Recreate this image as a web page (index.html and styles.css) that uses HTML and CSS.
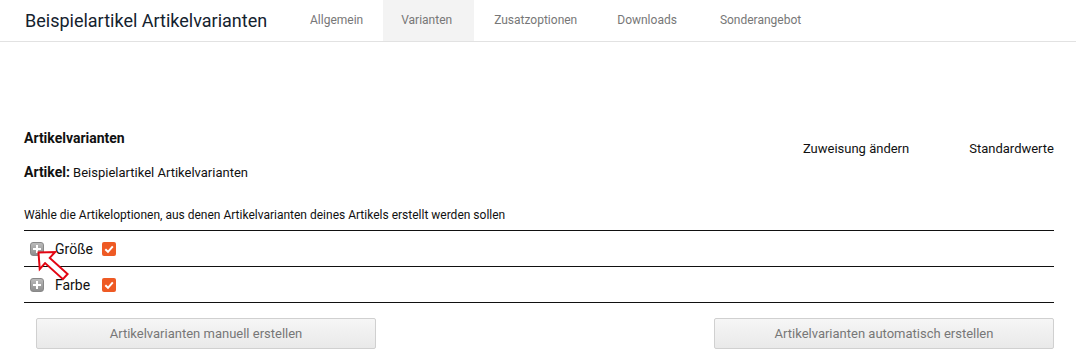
FILE: index.html
```html
<!DOCTYPE html>
<html lang="de">
<head>
<meta charset="utf-8">
<title>Artikelvarianten</title>
<link rel="stylesheet" href="styles.css">
</head>
<body>
<header class="topbar">
  <h1 class="title">Beispielartikel Artikelvarianten</h1>
  <nav class="tabs">
    <a class="tab">Allgemein</a>
    <a class="tab active">Varianten</a>
    <a class="tab">Zusatzoptionen</a>
    <a class="tab">Downloads</a>
    <a class="tab">Sonderangebot</a>
  </nav>
</header>
<main class="content">
  <div class="headrow">
    <div class="info">
      <h2 class="section">Artikelvarianten</h2>
      <p class="article"><b>Artikel:</b> Beispielartikel Artikelvarianten</p>
    </div>
    <div class="actions">
      <a class="action">Zuweisung ändern</a>
      <a class="action">Standardwerte</a>
    </div>
  </div>
  <p class="hint">Wähle die Artikeloptionen, aus denen Artikelvarianten deines Artikels erstellt werden sollen</p>
  <div class="options">
    <div class="row">
      <span class="plus"></span>
      <span class="label">Größe</span>
      <span class="check"><svg viewBox="0 0 14 14" width="14" height="14"><path d="M3.3 7.2 L6 9.8 L10.8 4.4" fill="none" stroke="#fff" stroke-width="2"/></svg></span>
    </div>
    <div class="row">
      <span class="plus"></span>
      <span class="label">Farbe</span>
      <span class="check"><svg viewBox="0 0 14 14" width="14" height="14"><path d="M3.3 7.2 L6 9.8 L10.8 4.4" fill="none" stroke="#fff" stroke-width="2"/></svg></span>
    </div>
  </div>
  <div class="buttons">
    <button class="btn">Artikelvarianten manuell erstellen</button>
    <button class="btn">Artikelvarianten automatisch erstellen</button>
  </div>
</main>
<svg class="arrow" width="1076" height="364" viewBox="0 0 1076 364">
  <polygon transform="translate(38.5 252.5) rotate(42)" points="0,0 12,-11.5 12,-3.5 36,-3.5 36,3.5 12,3.5 12,11.5" fill="#fff" stroke="#e30613" stroke-width="2" stroke-linejoin="miter"/>
</svg>
</body>
</html>
```
FILE: styles.css
```css
* { box-sizing: border-box; }
html, body { margin: 0; padding: 0; background: #fff; }
body {
  font-family: Roboto, "Liberation Sans", Arial, sans-serif;
  color: #111;
  position: relative;
  width: 1076px;
  height: 364px;
  overflow: hidden;
}
.topbar {
  display: flex;
  align-items: stretch;
  height: 42px;
  border-bottom: 1px solid #e2e2e2;
  padding-left: 25px;
}
.title {
  margin: 0;
  font-size: 18px;
  font-weight: 400;
  color: #14222e;
  line-height: 41px;
  width: 265px;
  white-space: nowrap;
}
.tabs { display: flex; }
.tab {
  display: block;
  padding: 0 20px;
  font-size: 12px;
  color: #777;
  line-height: 41px;
}
.tab.active { background: #f3f3f3; padding: 0 22px 0 18px; }
.tab:last-child { padding-left: 23px; }
.content { padding: 0 22px 0 24px; }
.headrow {
  display: flex;
  justify-content: space-between;
  padding-top: 88px;
}
.section {
  margin: 0;
  font-size: 14px;
  font-weight: 700;
  line-height: 17px;
}
.article {
  margin: 17px 0 0;
  font-size: 13px;
  line-height: 17px;
}
.article b { font-size: 14px; }
.actions {
  display: flex;
  gap: 60px;
  padding-top: 11px;
  font-size: 13px;
}
.action { color: #111; }
.hint {
  margin: 27px 0 0;
  font-size: 12px;
  line-height: 15px;
  padding-bottom: 7px;
  border-bottom: 1px solid #111;
}
.row {
  display: flex;
  align-items: center;
  height: 36px;
  border-bottom: 1px solid #111;
  padding-left: 6px;
  padding-top: 1px;
}
.plus {
  width: 14px;
  height: 14px;
  border-radius: 3px;
  background: linear-gradient(#bbb, #8e8e8e);
  border: 1px solid #888;
  position: relative;
}
.plus::before, .plus::after {
  content: "";
  position: absolute;
  background: #fff;
}
.plus::before { left: 2px; right: 2px; top: 5px; height: 2px; }
.plus::after { top: 2px; bottom: 2px; left: 5px; width: 2px; }
.label {
  font-size: 14px;
  margin-left: 11px;
  width: 47px;
}
.check {
  width: 14px;
  height: 14px;
  border-radius: 2px;
  background: #ee5a24;
  display: flex;
}
.buttons {
  display: flex;
  justify-content: space-between;
  padding: 15px 0 0 12px;
}
.btn {
  width: 340px;
  height: 31px;
  background: linear-gradient(#f6f6f6, #e9e9e9);
  border: 1px solid #d0d0d0;
  border-radius: 2px;
  font-family: inherit;
  font-size: 13px;
  color: #777;
}
.arrow {
  position: absolute;
  left: 0;
  top: 0;
  pointer-events: none;
}
```
